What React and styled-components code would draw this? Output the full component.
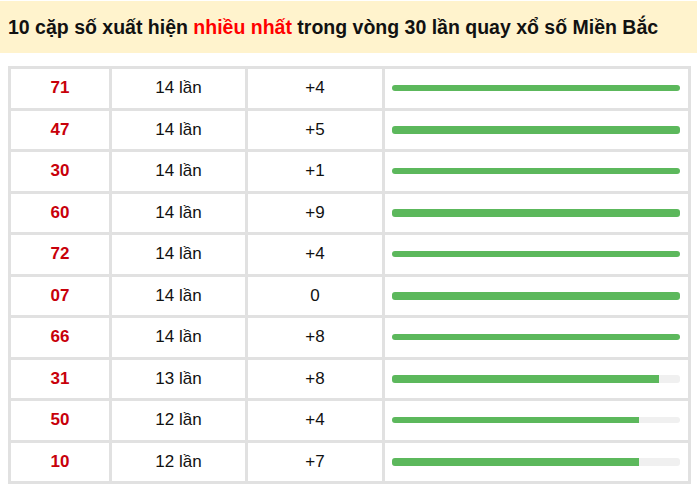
import styled, { createGlobalStyle } from 'styled-components';

const rows = [
    { num: '71', count: 14, diff: '+4' },
    { num: '47', count: 14, diff: '+5' },
    { num: '30', count: 14, diff: '+1' },
    { num: '60', count: 14, diff: '+9' },
    { num: '72', count: 14, diff: '+4' },
    { num: '07', count: 14, diff: '0' },
    { num: '66', count: 14, diff: '+8' },
    { num: '31', count: 13, diff: '+8' },
    { num: '50', count: 12, diff: '+4' },
    { num: '10', count: 12, diff: '+7' },
];

const maxCount = 14;

function App() {
    return (
        <>
            <GlobalStyle />
            <Header>
                10 cặp số xuất hiện <Hot>nhiều nhất</Hot> trong vòng 30 lần
                quay xổ số Miền Bắc
            </Header>
            <Content>
                <Table>
                    <tbody>
                        {rows.map((row, i) => (
                            <tr key={row.num}>
                                <NumCell>{row.num}</NumCell>
                                <TextCell>{row.count} lần</TextCell>
                                <DiffCell>{row.diff}</DiffCell>
                                <BarCell>
                                    <Track $thick={i % 2 === 1}>
                                        <Fill
                                            style={{
                                                width: `${(row.count / maxCount) * 100}%`,
                                            }}
                                        />
                                    </Track>
                                </BarCell>
                            </tr>
                        ))}
                    </tbody>
                </Table>
            </Content>
        </>
    );
}

const GlobalStyle = createGlobalStyle`
    body {
        margin: 0;
        background: #fff;
        font-family: 'Liberation Sans', Arial, sans-serif;
    }
`;

const Header = styled.div`
    height: 52px;
    margin-top: 1px;
    padding: 0 8px;
    display: flex;
    align-items: center;
    gap: 0;
    box-sizing: border-box;
    background: #fff3cd;
    color: #111;
    font-size: 19.5px;
    font-weight: bold;
    white-space: pre;
`;

const Hot = styled.span`
    color: #f00;
`;

const Content = styled.div`
    padding: 13px 6px 0 8px;
`;

const Table = styled.table`
    width: 683px;
    border-collapse: collapse;
    font-size: 17px;

    td {
        border: 3px solid #e1e1e1;
        height: 38.5px;
        padding: 0;
        text-align: center;
        vertical-align: middle;
    }
`;

const NumCell = styled.td`
    width: 98px;
    color: #c8000a;
    font-weight: bold;
`;

const TextCell = styled.td`
    width: 133px;
    color: #111;
`;

const DiffCell = styled.td`
    width: 134px;
    color: #111;
`;

const BarCell = styled.td`
    && {
        padding: 0 8px 0 7px;
    }
`;

const Track = styled.div`
    height: ${(p) => (p.$thick ? '8px' : '6px')};
    background: #f0f0f0;
    border-radius: 3px;
    overflow: hidden;
`;

const Fill = styled.div`
    height: 100%;
    background: #5cb85c;
`;

export default App;
